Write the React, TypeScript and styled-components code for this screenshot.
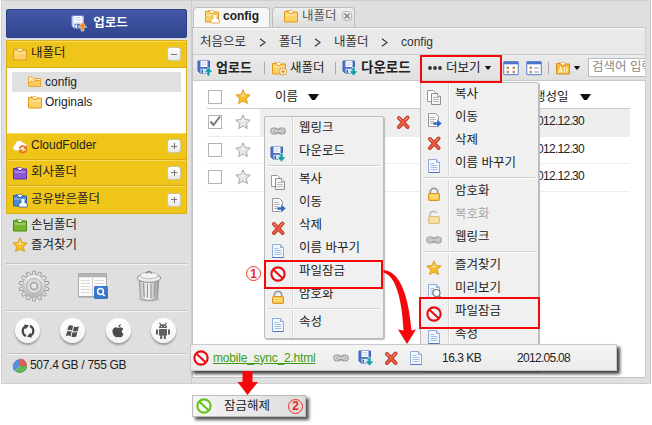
import React from "react";
import styled, { createGlobalStyle, css } from "styled-components";

const GlobalStyle = createGlobalStyle`
  * { box-sizing: border-box; }
  body {
    margin: 0;
    background: #fff;
    font-family: "Liberation Sans", "Noto Sans CJK KR", sans-serif;
    font-size: 12.5px;
    color: #222;
    overflow: hidden;
  }
`;

/* ---------- icons ---------- */

const Svg = styled.svg<{ $w?: number; $h?: number }>`
  width: ${(p) => p.$w ?? 16}px;
  height: ${(p) => p.$h ?? 16}px;
  flex: none;
  display: block;
  overflow: visible;
`;

const FolderIcon = ({ main = "#fbd066", edge = "#e29a1c", person = false, plus = false, bars = false }) => (
  <Svg viewBox="0 0 16 16">
    <path d="M4 2.5h5l3 2v3H4z" fill="#fff" stroke={edge} strokeWidth=".6" />
    <path d="M1.500 3.500h4l1.500 2h2l1-1.500h4.500v10h-13z" fill={main} stroke={edge} />
    {!bars && <path d="M2.500 7h11" stroke="#fff" strokeOpacity=".55" />}
    {bars && <path d="M3.500 13l2-5.500 2 5.500M4.500 11.300h2.200M9.500 7v6M12 7v6" fill="none" stroke="#fff3c8" strokeWidth="1.200" />}
    {person && (
      <path d="M11 6a2.300 2.300 0 0 1 1.500 4l2.800 2v3h-8.500v-3l2.700-2A2.300 2.300 0 0 1 11 6z" fill="#fff" stroke={edge} strokeWidth=".8" />
    )}
    {plus && (
      <g>
        <circle cx="12" cy="11.500" r="3.500" fill="#fff" stroke={edge} />
        <path d="M12 9.500v4M10 11.500h4" stroke={edge} strokeWidth="1.300" />
      </g>
    )}
  </Svg>
);

const OpenFolderIcon = () => (
  <Svg viewBox="0 0 16 16">
    <path d="M1.500 12V3h4l1.500 1.500h6.500V12z" fill="#fff3cd" stroke="#e8a63c" />
    <path d="M4 6l6-1 2 3H4z" fill="#fff" stroke="#e8a63c" strokeWidth=".6" />
    <path d="M1.500 12.500V8h4L7 6.500h6.500v6z" fill="#fcc95d" stroke="#e8a63c" />
  </Svg>
);

const SaveIcon = ({ dir = "down", color = "#16a0a6", light = false }) => (
  <Svg viewBox="0 0 16 16">
    <path d="M1 1h11.500v12H3l-2-2z" fill={light ? "#dfe8fb" : "#4a72c4"} stroke={light ? "#90a8e0" : "#3b60b4"} />
    <path d="M3.500 1h7v6h-7z" fill="#fff" />
    <path d="M4.500 2.700h5M4.500 4.900h5" stroke="#aabfe6" strokeWidth=".8" />
    <path d="M3.500 8.800h6v4.200h-6z" fill={light ? "#5a7cce" : "#dbe5f8"} />
    <path d="M4.500 9.800h1.500v3.200h-1.500z" fill={light ? "#fff" : "#3b60b4"} />
    <path
      d={dir === "down" ? "M10 7.500h3V11h2.800l-4.300 5L7.200 11H10z" : "M10 16h3v-3.700h2.800l-4.300-5-4.300 5H10z"}
      fill={color}
      stroke="#fff"
      strokeWidth=".5"
    />
  </Svg>
);

const STAR = "M8 .8l2.100 4.700 5.100.6-3.800 3.500 1 5L8 12.100l-4.400 2.500 1-5L.8 6.100l5.100-.6z";

const StarIcon = ({ off = false }) => (
  <Svg viewBox="0 0 16 16">
    <path d={STAR} fill={off ? "#e6e6e6" : "#f6bd27"} stroke={off ? "#a2a2a2" : "#d99a1c"} strokeWidth=".9" />
    <path d="M8 3l1.300 3.200 3 .3L8 8 4 6.600l2.700-.4z" fill="#fff" opacity=".45" />
  </Svg>
);

const LinkIcon = () => (
  <Svg viewBox="0 0 16 16">
    <rect x=".8" y="5" width="7" height="6" rx="3" fill="#ddd" stroke="#959595" strokeWidth="1.100" />
    <rect x="8.200" y="5" width="7" height="6" rx="3" fill="#ddd" stroke="#959595" strokeWidth="1.100" />
    <rect x="3" y="7" width="10" height="2" rx="1" fill="#f5f5f5" stroke="#8c8c8c" strokeWidth=".8" />
  </Svg>
);

const CopyIcon = () => (
  <Svg viewBox="0 0 16 16">
    <path d="M1.500 1.500h6l3 3v8h-9z" fill="#fff" stroke="#999" />
    <path d="M5.500 4.500h6l3 3v8h-9z" fill="#f4f4f4" stroke="#8e8e8e" />
    <path d="M7 8.500h6M7 10.500h6M7 12.500h6" stroke="#b5b5b5" strokeWidth=".9" />
    <path d="M11.500 4.500v3h3" fill="#fff" stroke="#8e8e8e" strokeWidth=".8" />
  </Svg>
);

const MoveIcon = () => (
  <Svg viewBox="0 0 16 16">
    <path d="M2.500 1.500h7l3 3v10h-10z" fill="#f8f8f8" stroke="#999" />
    <path d="M4 5.500h5M4 7.500h6M4 9.500h4M4 11.500h4" stroke="#b0b0b0" strokeWidth=".9" />
    <path d="M7 10h4V7l5 4.500L11 16v-3H7z" fill="#2d6ac0" stroke="#fff" strokeWidth=".5" />
  </Svg>
);

const DeleteIcon = () => (
  <Svg viewBox="0 0 16 16">
    <path d="M4 4l8.500 9M12.500 3.500L4 13" stroke="#b5301c" strokeWidth="4" strokeLinecap="round" />
    <path d="M4 4l8.500 9M12.500 3.500L4 13" stroke="#e75a41" strokeWidth="2.500" strokeLinecap="round" />
    <path d="M4 4l2 2M12.500 3.500l-2 2.200" stroke="#f6a090" strokeWidth="1" strokeLinecap="round" />
  </Svg>
);

const DocIcon = ({ lens = false }) => (
  <Svg viewBox="0 0 16 16">
    <path d="M2.500 1.500h8l3 3v10h-11z" fill="#f3f7ff" stroke="#8fabd8" />
    <path d="M10.500 1.500v3h3" fill="#cbdcf5" stroke="#8fabd8" />
    <path d="M4.500 5.500h4M4.500 7.500h7M4.500 9.500h7M4.500 11.500h7" stroke="#a9c0e6" />
    <path d="M2.500 14.500h11" stroke="#5575b6" />
    {lens && (
      <g>
        <circle cx="10.500" cy="10" r="3.500" fill="#f7fbff" stroke="#777" strokeWidth="1.200" />
        <path d="M13 12.700l2.500 2.800" stroke="#777" strokeWidth="1.700" />
      </g>
    )}
  </Svg>
);

const LockIcon = ({ open = false }) => (
  <Svg viewBox="0 0 16 16" opacity={open ? 0.55 : 1}>
    <path d={open ? "M4 8V5.500a3.500 3.500 0 0 1 6.500-1.500" : "M4.300 8V6a3.700 3.700 0 0 1 7.400 0v2"} fill="none" stroke="#9a9a9a" strokeWidth="1.700" />
    <rect x="2.500" y="7.500" width="11" height="7" rx=".8" fill="#fbc744" stroke="#d99427" />
    <path d="M4 9.500h8M4 11.500h8" stroke="#ffe59a" />
  </Svg>
);

const BanIcon = ({ color = "#e80c10" }) => (
  <Svg viewBox="0 0 16 16">
    <circle cx="8" cy="8" r="6.600" fill="#fff" fillOpacity=".6" stroke={color} strokeWidth="2.100" />
    <path d="M3.400 3.800l9.200 8.400" stroke={color} strokeWidth="2.100" />
  </Svg>
);

const CloudIcon = () => (
  <Svg viewBox="0 0 16 16">
    <path d="M3.500 12.500a3 3 0 0 1-.5-5.800 4.500 4.500 0 0 1 8.500-1.500 3.500 3.500 0 0 1 2 6.500l-2 .8z" fill="#fff" stroke="#d9c690" strokeWidth=".6" />
    <path d="M7.500 10.500a3.500 3.500 0 0 1 6-1M14.500 11.500a3.500 3.500 0 0 1-6 2" fill="none" stroke="#e8731d" strokeWidth="1.800" />
    <path d="M15 7v4h-4zM7 15.500v-4h4z" fill="#e8731d" />
  </Svg>
);

const ViewIcon = ({ list = false }) => (
  <Svg viewBox="0 0 16 16">
    <rect x=".7" y="1.700" width="14.600" height="13" rx="1" fill="#fff" stroke="#6d8fd0" strokeWidth="1.200" />
    <path d="M.7 3h14.600" stroke="#4a74ca" strokeWidth="2.600" />
    <path d="M3.500 6.500h2.500v2.500H3.500zM3.500 10.800h2.500v2.500H3.500z" fill="#dc8474" />
    <path d="M4 8.200h2M4 12.600h2" stroke="#70b777" />
    {list ? (
      <path d="M8 8h5M8 12h5" stroke="#8495b8" strokeWidth="1.200" />
    ) : (
      <g>
        <path d="M9.500 6.500H12v2.500H9.500zM9.500 10.800H12v2.500H9.500z" fill="#dc8474" />
        <path d="M10 8.200h2M10 12.600h2" stroke="#70b777" />
      </g>
    )}
  </Svg>
);

const Caret = ({ w = 6, h = 3.5 }) => (
  <Svg $w={w} $h={h} viewBox="0 0 12 6" preserveAspectRatio="none">
    <path d="M0 0h12L7.500 6h-3z" fill="#111" />
  </Svg>
);

const GearIcon = () => (
  <Svg $w={32} $h={32} viewBox="0 0 32 32">
    <defs>
      <linearGradient id="gear" x1="0" y1="0" x2="0" y2="1">
        <stop offset="0" stopColor="#f1f1f1" />
        <stop offset="1" stopColor="#b4b4b4" />
      </linearGradient>
    </defs>
    {Array.from({ length: 14 }, (_, i) => (
      <path key={i} d="M13.800 5.500l1-4.500h2.400l1 4.500z" fill="#e2e2e2" stroke="#8f8f8f" strokeWidth=".8" transform={`rotate(${(i * 360) / 14} 16 16)`} />
    ))}
    <circle cx="16" cy="16" r="11.500" fill="url(#gear)" stroke="#aaa" strokeWidth=".6" />
    <circle cx="16" cy="16" r="7.500" fill="#d8d8d8" stroke="#aaa" strokeWidth=".8" />
    <circle cx="16" cy="16" r="3.500" fill="#e6e6e6" stroke="#888" />
  </Svg>
);

const ReportIcon = () => (
  <Svg $w={32} $h={30} viewBox="0 0 32 30">
    <rect x="1.500" y="2.500" width="28" height="23" fill="#fafafa" stroke="#aaa" />
    <path d="M2 4.500h27" stroke="#b4b4b4" strokeWidth="3.500" />
    <path d="M2 26.500h28" stroke="#bbb" />
    <path d="M15.500 7v18" stroke="#ccc" />
    <path d="M4 9.500h9M4 12.500h9M4 15.500h9M4 18.500h9M4 21.500h9M18 9.500h9M18 12.500h9" stroke="#d9d9d9" />
    <rect x="17" y="15" width="14" height="13" rx="1.500" fill="#3978cb" />
    <circle cx="23.500" cy="20.500" r="2.900" fill="none" stroke="#fff" strokeWidth="1.500" />
    <path d="M25.500 22.700l2.200 2.300" stroke="#fff" strokeWidth="1.700" />
  </Svg>
);

const TrashIcon = () => (
  <Svg $w={26} $h={32} viewBox="0 0 26 32">
    <defs>
      <linearGradient id="can">
        <stop offset="0" stopColor="#bbb" />
        <stop offset=".45" stopColor="#f8f8f8" />
        <stop offset="1" stopColor="#9b9b9b" />
      </linearGradient>
    </defs>
    <ellipse cx="13.500" cy="29.500" rx="11" ry="2" fill="#c5c5c5" />
    <path d="M3 8l1.500 20c2 3 15 3 17 0L23 8z" fill="url(#can)" stroke="#8c8c8c" strokeWidth=".8" />
    <path d="M7.500 13l.7 14M11.500 13.500V28M15 13.500V28M19 13l-.8 14" stroke="#999" strokeWidth="1.200" />
    <ellipse cx="13" cy="8" rx="11.700" ry="4.300" fill="#ededed" stroke="#8c8c8c" />
    <ellipse cx="13" cy="5.500" rx="9" ry="3.200" fill="#f4f4f4" stroke="#aaa" strokeWidth=".8" />
    <path d="M10 3.500q3-4 6 0" fill="none" stroke="#888" strokeWidth="1.300" />
  </Svg>
);

const SyncGlyph = () => (
  <Svg viewBox="0 0 16 16">
    <path d="M6 13A5.300 5.300 0 0 1 5 3.700M10 3a5.300 5.300 0 0 1 1 9.300" fill="none" stroke="#454545" strokeWidth="2.200" />
    <path d="M4 1.500l5 .8-3.300 4zM12 14.500l-5-.8 3.300-4z" fill="#454545" />
  </Svg>
);

const WindowsGlyph = () => (
  <Svg viewBox="0 0 16 16">
    <path d="M3.500 3q2.300-1.300 4.600 0L7 7.500Q4.700 6.200 2.300 7.500zM9 3.400q2.500 1.200 5-.2l-1.200 4.500q-2.500 1.400-4.900.2zM2 8.600q2.400-1.300 4.700 0l-1.200 4.600q-2.300-1.300-4.700 0zM7.600 9q2.400 1.200 4.900-.2l-1.200 4.600q-2.500 1.300-4.900.2z" fill="#505050" />
  </Svg>
);

const AppleGlyph = () => (
  <Svg viewBox="0 0 16 16">
    <path d="M10.800 1q.2 2.500-2.500 3Q8.200 1.900 10.800 1zM8 5q1-.7 2.300-.7 2 0 3 1.700-3.300 2.200.2 5.200Q12 14.500 10 14.300q-2-.8-3.700 0Q4.500 14.600 3 11 1.500 6.500 4 4.900 6 3.800 8 5z" fill="#4a4a4a" />
  </Svg>
);

const AndroidGlyph = () => (
  <Svg $w={18} $h={18} viewBox="0 0 18 18">
    <path d="M5 6a4 3.800 0 0 1 8 0zM5 7h8v6.500H5zM2 7.500h2v5H2zM14 7.500h2v5h-2zM6.200 13h2v4h-2zM9.800 13h2v4h-2z" fill="#5e5e5e" />
    <path d="M5.500.8L7 3M12.500.8L11 3" stroke="#5e5e5e" strokeWidth="1.200" />
    <path d="M7 4.500h.9M10.200 4.500h.9" stroke="#fff" />
  </Svg>
);

const PieIcon = () => (
  <Svg viewBox="0 0 16 16">
    <path d="M7.500 8V1.500a7 7 0 0 0-5 11z" fill="#5c8edc" stroke="#3467bd" strokeWidth=".6" />
    <path d="M8.500 7.500V1a7 7 0 0 1 6 6.500z" fill="#e75b4d" stroke="#bf3830" strokeWidth=".6" />
    <path d="M8.500 8.500h6.300A7 7 0 0 1 3.500 13z" fill="#5fba52" stroke="#378c31" strokeWidth=".6" />
  </Svg>
);

/* ---------- shared text ---------- */

const Label = styled.span<{ $w?: number; $bold?: boolean; $color?: string; $size?: number; $ls?: number }>`
  flex: none;
  white-space: nowrap;
  line-height: 18px;
  ${(p) => p.$w && css`width: ${p.$w}px;`}
  ${(p) => p.$bold && css`font-weight: 700;`}
  ${(p) => p.$color && css`color: ${p.$color};`}
  ${(p) => p.$size && css`font-size: ${p.$size}px;`}
  ${(p) => p.$ls && css`letter-spacing: ${p.$ls}px;`}
`;

/* ---------- frame ---------- */

const Stage = styled.div`
  position: relative;
  width: 652px;
  height: 425px;
  overflow: hidden;
  background: #fff;
`;

const Frame = styled.div`
  display: flex;
  height: 384px;
  margin-left: 1px;
  width: 650px;
  background: #dfdfdf;
  border: 1px solid #cfcfcf;
  border-right: 1px solid #c4c4c4;
`;

/* ---------- sidebar ---------- */

const Sidebar = styled.aside`
  width: 190px;
  padding: 8px 4px 0 4px;
  border-right: 1px solid #cbcbcb;
`;

const UploadButton = styled.button`
  display: flex;
  align-items: center;
  justify-content: center;
  gap: 6px;
  width: 181px;
  height: 29px;
  padding: 0 0 2px 6px;
  border: 1px solid #2c3c80;
  border-radius: 2px;
  background: linear-gradient(#4358a8, #32458f);
  color: #fff;
  font: inherit;
`;

const Accordion = styled.div`
  margin-top: 2px;
  border: 1px solid #d9b01c;
  background: #f0c51a;
`;

const AccordionHead = styled.div<{ $h: number }>`
  display: flex;
  align-items: center;
  gap: 3px;
  height: ${(p) => p.$h}px;
  padding: 0 5px;
  border-bottom: 1px solid #dba914;
  box-shadow: inset 0 1px #f7d95b;
  &:last-child { border-bottom: 0; }
  & > ${Label} { margin-top: -2px; }
`;

const Toggle = styled.span<{ $plus?: boolean }>`
  width: 14px;
  height: 14px;
  margin-left: auto;
  border: 1px solid #cfc6a4;
  border-radius: 3px;
  background:
    linear-gradient(#777, #777) center / 6px 1px no-repeat,
    ${(p) => (p.$plus ? "linear-gradient(#777, #777) center / 1px 6px no-repeat," : "")}
    linear-gradient(#fff, #e8e8e8);
  flex: none;
`;

const Tree = styled.div`
  height: 65px;
  padding: 4px 5px 0;
  background: #fff;
`;

const TreeRow = styled.div<{ $active?: boolean }>`
  display: flex;
  align-items: center;
  gap: 2px;
  height: 20px;
  padding-left: 15px;
  background: ${(p) => (p.$active ? "#e0e0e0" : "none")};
  & > ${Label} { margin-top: -1px; }
`;

const Shortcuts = styled.div`
  height: 50px;
  padding-top: 1px;
  border-bottom: 1px solid #c3c3c3;
  box-shadow: 0 1px #f2f2f2;
`;

const ShortcutRow = styled.div`
  display: flex;
  align-items: center;
  gap: 3px;
  height: 20px;
  padding-left: 6px;
  & > ${Label} { margin-top: -1px; }
`;

const ToolRow = styled.div`
  display: flex;
  align-items: center;
  height: 47px;
  gap: 27px;
  padding: 0 0 2px 12px;
  border-bottom: 1px solid #c3c3c3;
  box-shadow: 0 1px #f2f2f2;
`;

const PlatformRow = styled.div`
  display: flex;
  align-items: center;
  justify-content: space-between;
  height: 43px;
  padding: 0 11px 3px 9px;
  border-bottom: 1px solid #c3c3c3;
  box-shadow: 0 1px #f2f2f2;
`;

const RoundButton = styled.span`
  display: flex;
  align-items: center;
  justify-content: center;
  width: 25px;
  height: 25px;
  border-radius: 50%;
  background: linear-gradient(#fff, #f2f2f2);
  box-shadow: 0 2px 2px #999;
`;

const Quota = styled.div`
  display: flex;
  align-items: center;
  gap: 2px;
  height: 24px;
  padding-left: 6px;
  & > ${Label} { margin-top: -2px; }
`;

/* ---------- main panel ---------- */

const Main = styled.main`
  width: 454px;
  padding-top: 6px;
`;

const Tabs = styled.div`
  display: flex;
  gap: 2px;
  height: 20px;
  padding-left: 1px;
`;

const Tab = styled.div<{ $active?: boolean }>`
  display: flex;
  align-items: center;
  gap: 3px;
  width: ${(p) => (p.$active ? 77 : 83)}px;
  padding: 0 0 3px 10px;
  border: 1px solid #bdbdbd;
  border-bottom: 0;
  border-radius: 4px 4px 0 0;
  background: ${(p) => (p.$active ? "#f6f6f6" : "linear-gradient(#eee, #dedede)")};
`;

const CloseBox = styled.span`
  display: flex;
  width: 10px;
  height: 10px;
  margin-left: 1px;
  padding: 1px;
  border: 1px solid #bbb;
  border-radius: 3px;
`;

const Panel = styled.section`
  height: 351px;
  border: 1px solid #c3c3c3;
  border-right-color: #d0d0d0;
  background: #fff;
  overflow: hidden;
`;

const Breadcrumb = styled.nav`
  display: flex;
  align-items: center;
  height: 27px;
  padding-left: 7px;
  border-top: 2px solid #f1f1f1;
  border-bottom: 1px solid #ccc;
  background: #e9e9e9;
`;

const Crumb = styled(Label)<{ $gap?: number }>`
  color: #333;
  margin: -1px 0 0 ${(p) => p.$gap ?? 0}px;
`;

const Chevron = () => (
  <Svg $w={7} $h={9} viewBox="0 0 7 9">
    <path d="M1 .8l5 3.700-5 3.700" fill="none" stroke="#333" strokeWidth="1.100" />
  </Svg>
);

const Toolbar = styled.div`
  display: flex;
  align-items: center;
  height: 26px;
  padding-left: 4px;
  background: linear-gradient(#ebebeb, #e0e0e0);
  border-bottom: 1px solid #c9c9c9;
`;

const Tool = styled.div<{ $w: number; $gap?: number }>`
  display: flex;
  align-items: center;
  gap: ${(p) => p.$gap ?? 3}px;
  width: ${(p) => p.$w}px;
  flex: none;
`;

const Divider = styled.span`
  width: 1px;
  height: 12px;
  margin-right: 6px;
  background: #aaa;
  flex: none;
`;

const Search = styled.div`
  width: 80px;
  height: 19px;
  padding-left: 3px;
  border: 1px solid #b5bcc6;
  background: #fff;
  color: #888;
  flex: none;
  line-height: 17px;
  white-space: nowrap;
`;

const Grid = styled.div`
  width: 423px;
  margin-left: 14px;
`;

const HeadRow = styled.div`
  display: grid;
  grid-template-columns: 28px 40px 33px 226px 46px auto;
  align-items: center;
  height: 28px;
  padding-top: 5px;
  border-bottom: 1px solid #ccc;
`;

const FileRow = styled.div`
  display: grid;
  grid-template-columns: 28px 25px 1fr;
  align-items: center;
  height: 27.600px;
  border-bottom: 1px solid #ededed;
`;

const FileCells = styled.div<{ $active?: boolean }>`
  display: grid;
  grid-template-columns: 125px 10px 136px auto;
  align-items: center;
  height: 100%;
  background: ${(p) => (p.$active ? "#eee" : "#fff")};
  & > ${Label} { margin-top: -2px; }
`;

const LinkTail = styled.i`
  width: 2px;
  height: 2px;
  margin-top: 5px;
  background: #2fa3c4;
`;

const Check = styled.span`
  display: block;
  width: 14px;
  height: 14px;
  margin-left: 1px;
  border: 1.500px solid #b4b4b4;
  background: #fff;
`;

/* ---------- menus ---------- */

const MenuBox = styled.div<{ $x: number; $y: number; $w: number; $h: number }>`
  position: absolute;
  left: ${(p) => p.$x}px;
  top: ${(p) => p.$y}px;
  width: ${(p) => p.$w}px;
  height: ${(p) => p.$h}px;
  border: 1px solid #bcbcbc;
  border-radius: 2px;
  background: linear-gradient(90deg, transparent 27px, #d8d8d8 27px 28px, #fff 28px 29px, transparent 29px), #f0f0f0;
  box-shadow: 1px 1px 1px #bbb;
`;

const MenuItem = styled.div<{ $off?: boolean }>`
  display: flex;
  align-items: center;
  gap: 13px;
  height: 23px;
  padding-left: 5px;
  color: ${(p) => (p.$off ? "#a5a5a5" : "#222")};
  & > svg { margin-top: 5px; }
  & > ${Label} { margin-top: -1px; }
`;

const MenuRule = styled.div`
  height: 5px;
  margin: 0 3px;
  background: linear-gradient(#d0d0d0, #d0d0d0) 0 2px / 100% 1px no-repeat, linear-gradient(#fff, #fff) 0 3px / 100% 1px no-repeat, #f0f0f0;
`;

type Entry = { icon: React.ReactNode; text: string; off?: boolean } | null;

const Menu = ({ x, y, w, h, entries }: { x: number; y: number; w: number; h: number; entries: Entry[] }) => (
  <MenuBox $x={x} $y={y} $w={w} $h={h}>
    {entries.map((e, i) =>
      e ? (
        <MenuItem key={i} $off={e.off}>
          {e.icon}
          <Label>{e.text}</Label>
        </MenuItem>
      ) : (
        <MenuRule key={i} />
      )
    )}
  </MenuBox>
);

const contextEntries: Entry[] = [
  { icon: <LinkIcon />, text: "웹링크" },
  { icon: <SaveIcon />, text: "다운로드" },
  null,
  { icon: <CopyIcon />, text: "복사" },
  { icon: <MoveIcon />, text: "이동" },
  { icon: <DeleteIcon />, text: "삭제" },
  { icon: <DocIcon />, text: "이름 바꾸기" },
  { icon: <BanIcon />, text: "파일잠금" },
  { icon: <LockIcon />, text: "암호화" },
  null,
  { icon: <DocIcon />, text: "속성" },
];

const moreEntries: Entry[] = [
  { icon: <CopyIcon />, text: "복사" },
  { icon: <MoveIcon />, text: "이동" },
  { icon: <DeleteIcon />, text: "삭제" },
  { icon: <DocIcon />, text: "이름 바꾸기" },
  null,
  { icon: <LockIcon />, text: "암호화" },
  { icon: <LockIcon open />, text: "복호화", off: true },
  { icon: <LinkIcon />, text: "웹링크" },
  null,
  { icon: <StarIcon />, text: "즐겨찾기" },
  { icon: <DocIcon lens />, text: "미리보기" },
  { icon: <BanIcon />, text: "파일잠금" },
  { icon: <DocIcon />, text: "속성" },
];

/* ---------- callouts ---------- */

const Highlight = styled.div<{ $x: number; $y: number; $w: number; $h: number }>`
  position: absolute;
  left: ${(p) => p.$x}px;
  top: ${(p) => p.$y}px;
  width: ${(p) => p.$w}px;
  height: ${(p) => p.$h}px;
  border: 2px solid #f5080c;
`;

const FloatingBar = styled.div`
  position: absolute;
  left: 190px;
  top: 344px;
  width: 427px;
  height: 27px;
  display: flex;
  align-items: center;
  padding-left: 2px;
  border: 1px solid #c8c8c8;
  background: linear-gradient(#f4f4f4, #ececec);
  box-shadow: 3px 3px 3px #444;
`;

const FileLink = styled(Label)`
  margin-left: 4px;
  color: #3f9c12;
  text-decoration: underline;
`;

const UnlockBar = styled.div`
  position: absolute;
  left: 192px;
  top: 395px;
  width: 114px;
  height: 22px;
  display: flex;
  align-items: center;
  gap: 12px;
  padding: 0 2px 0 3px;
  border: 1px solid #bbb;
  background: linear-gradient(90deg, #f5f5f5, #dcdcdc);
  box-shadow: 3px 3px 3px #555;
`;

const StepBadge = styled.span<{ $float?: boolean }>`
  display: flex;
  align-items: center;
  justify-content: center;
  width: 15px;
  height: 15px;
  margin-left: auto;
  border: 1.500px solid #f03026;
  border-radius: 50%;
  color: #f0261c;
  font-size: 12px;
  font-weight: 700;
  line-height: 12px;
  ${(p) => p.$float && css`position: absolute; left: 246px; top: 266px;`}
`;

const Arrows = styled.svg`
  position: absolute;
  inset: 0;
  width: 652px;
  height: 425px;
  pointer-events: none;
`;

const Dots = () => (
  <Svg $w={14} $h={4} viewBox="0 0 14 4">
    <circle cx="2" cy="2" r="1.900" fill="#333" />
    <circle cx="7" cy="2" r="1.900" fill="#333" />
    <circle cx="12" cy="2" r="1.900" fill="#333" />
  </Svg>
);

const CheckMark = () => (
  <Svg $w={12} $h={12} viewBox="0 0 12 12">
    <path d="M1.500 5.500l3 3.500L11 .5" fill="none" stroke="#777" strokeWidth="2" />
  </Svg>
);

export default function App() {
  return (
    <Stage>
      <GlobalStyle />
      <Frame>
        <Sidebar>
          <UploadButton>
            <SaveIcon dir="up" color="#f08a24" light />
            <Label $bold $size={12.5}>업로드</Label>
          </UploadButton>
          <Accordion>
            <AccordionHead $h={27}>
              <FolderIcon />
              <Label>내폴더</Label>
              <Toggle />
            </AccordionHead>
            <Tree>
              <TreeRow $active>
                <OpenFolderIcon />
                <Label $size={12}>config</Label>
              </TreeRow>
              <TreeRow>
                <FolderIcon />
                <Label $size={12}>Originals</Label>
              </TreeRow>
            </Tree>
            <AccordionHead $h={27}>
              <CloudIcon />
              <Label $size={12}>CloudFolder</Label>
              <Toggle $plus />
            </AccordionHead>
            <AccordionHead $h={26}>
              <FolderIcon main="#8c55d4" edge="#6030a8" />
              <Label>회사폴더</Label>
              <Toggle $plus />
            </AccordionHead>
            <AccordionHead $h={27}>
              <FolderIcon main="#4788d8" edge="#2862ac" person />
              <Label>공유받은폴더</Label>
              <Toggle $plus />
            </AccordionHead>
          </Accordion>
          <Shortcuts>
            <ShortcutRow>
              <FolderIcon main="#76b82a" edge="#4b8a10" />
              <Label>손님폴더</Label>
            </ShortcutRow>
            <ShortcutRow>
              <StarIcon />
              <Label>즐겨찾기</Label>
            </ShortcutRow>
          </Shortcuts>
          <ToolRow>
            <GearIcon />
            <ReportIcon />
            <TrashIcon />
          </ToolRow>
          <PlatformRow>
            <RoundButton><SyncGlyph /></RoundButton>
            <RoundButton><WindowsGlyph /></RoundButton>
            <RoundButton><AppleGlyph /></RoundButton>
            <RoundButton><AndroidGlyph /></RoundButton>
          </PlatformRow>
          <Quota>
            <PieIcon />
            <Label $size={12} $ls={-0.3}>507.4 GB / 755 GB</Label>
          </Quota>
        </Sidebar>

        <Main>
          <Tabs>
            <Tab $active>
              <FolderIcon person />
              <Label $bold $size={12}>config</Label>
            </Tab>
            <Tab>
              <FolderIcon />
              <Label $w={36} $color="#555">내폴더</Label>
              <CloseBox>
                <Svg $w={6} $h={6} viewBox="0 0 6 6">
                  <path d="M.5.5l5 5M5.500.5l-5 5" stroke="#888" strokeWidth="1.500" />
                </Svg>
              </CloseBox>
            </Tab>
          </Tabs>
          <Panel>
            <Breadcrumb>
              <Crumb $w={59}>처음으로</Crumb>
              <Chevron />
              <Crumb $w={35} $gap={13}>폴더</Crumb>
              <Chevron />
              <Crumb $w={47} $gap={13}>내폴더</Crumb>
              <Chevron />
              <Crumb $size={12} $gap={13}>config</Crumb>
            </Breadcrumb>
            <Toolbar>
              <Tool $w={67}>
                <SaveIcon dir="up" />
                <Label $bold $size={13}>업로드</Label>
              </Tool>
              <Divider />
              <Tool $w={64}>
                <FolderIcon plus />
                <Label>새폴더</Label>
              </Tool>
              <Divider />
              <Tool $w={86}>
                <SaveIcon />
                <Label $bold $size={13.5}>다운로드</Label>
              </Tool>
              <Tool $w={75} $gap={4}>
                <Dots />
                <Label>더보기</Label>
                <Caret />
              </Tool>
              <Tool $w={45} $gap={7}>
                <ViewIcon />
                <ViewIcon list />
              </Tool>
              <Divider />
              <Tool $w={33}>
                <FolderIcon main="#f8b83c" edge="#d98d1c" bars />
                <Caret />
              </Tool>
              <Search>검색어 입력</Search>
            </Toolbar>
            <Grid>
              <HeadRow>
                <Check />
                <StarIcon />
                <Label>이름</Label>
                <Caret w={11} h={6} />
                <Label>생성일</Label>
                <Caret w={11} h={6} />
              </HeadRow>
              {[true, false, false].map((active, i) => (
                <FileRow key={i}>
                  <Check>{active && <CheckMark />}</Check>
                  <StarIcon off />
                  <FileCells $active={active}>
                    {active ? <LinkTailCell /> : <span />}
                    {active ? <DeleteCell /> : <span />}
                    <span />
                    <Label $size={12} $ls={-0.7}>2012.12.30</Label>
                  </FileCells>
                </FileRow>
              ))}
            </Grid>
          </Panel>
        </Main>
      </Frame>

      <Menu x={264} y={116} w={120} h={223} entries={contextEntries} />
      <Menu x={420} y={82} w={119} h={290} entries={moreEntries} />

      <Highlight $x={420} $y={55} $w={82} $h={28} />
      <Highlight $x={264} $y={260} $w={119} $h={29} />
      <Highlight $x={419} $y={297} $w={121} $h={32} />

      <FloatingBar>
        <BanIcon />
        <FileLink $w={120} $size={12} $ls={-0.2}>mobile_sync_2.html</FileLink>
        <Tool $w={109} $gap={9}>
          <LinkIcon />
          <SaveIcon />
          <DeleteIcon />
          <DocIcon />
        </Tool>
        <Label $w={75} $size={12} $ls={-0.5}>16.3 KB</Label>
        <Label $size={12} $ls={-0.7}>2012.05.08</Label>
      </FloatingBar>

      <UnlockBar>
        <BanIcon color="#62c51a" />
        <Label>잠금해제</Label>
        <StepBadge>2</StepBadge>
      </UnlockBar>
      <StepBadge $float>1</StepBadge>

      <Arrows viewBox="0 0 652 425">
        <path d="M383.500 270C398 271 408 290 411.500 330.500l4.500-1-9 14.500-9-14.500 5.500 1C402 300 396 276 383.500 272.500z" fill="#f5080c" />
        <path d="M242.500 371h10v11h5.500l-10.500 13-10-13h5z" fill="#f5080c" />
      </Arrows>
    </Stage>
  );
}

/* Cells of the selected file row that stay visible beside the menu. */

const TailCell = styled.span`
  display: flex;
  justify-content: flex-end;
`;

function LinkTailCell() {
  return (
    <TailCell>
      <LinkTail />
    </TailCell>
  );
}

const ActionCell = styled.span`
  display: flex;
  padding-left: 10px;
`;

function DeleteCell() {
  return (
    <ActionCell>
      <DeleteIcon />
    </ActionCell>
  );
}
